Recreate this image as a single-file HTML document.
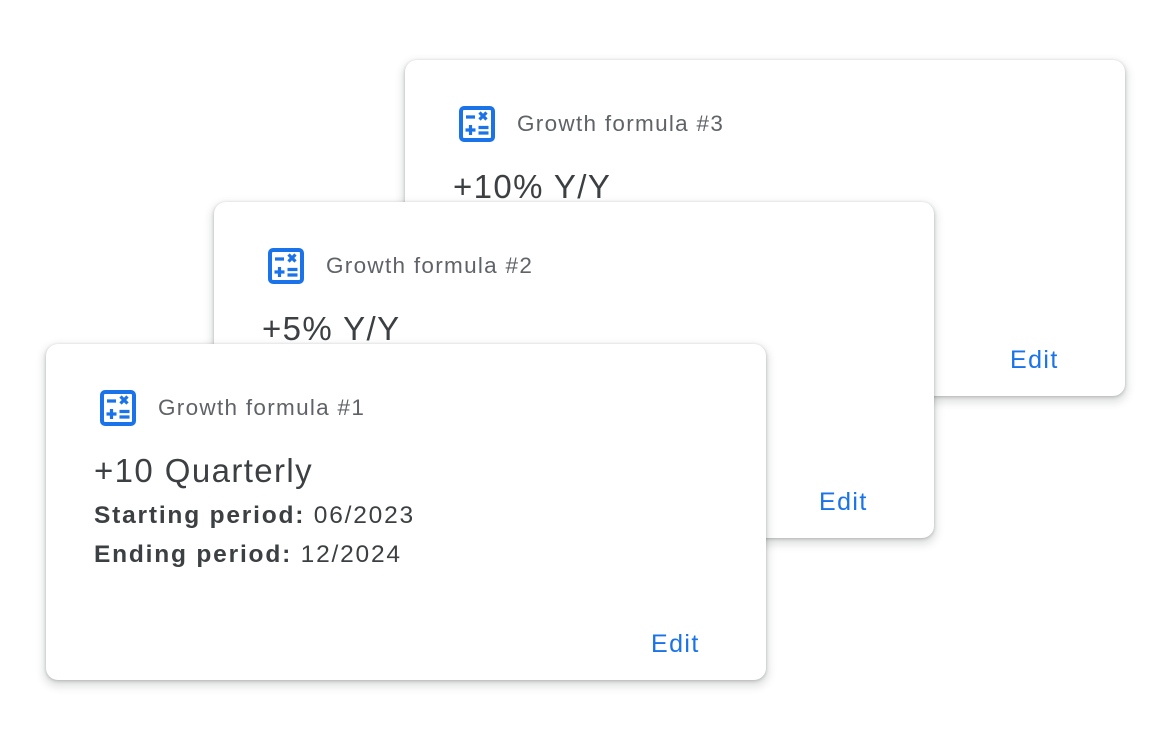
<!DOCTYPE html><html><head><style>
body{margin:0;width:1164px;height:748px;background:#fff;position:relative;overflow:hidden;font-family:"Liberation Sans",Arial,sans-serif}
.c{position:absolute;width:720px;height:336px;background:#fff;border-radius:12px;box-shadow:0 1px 3px rgba(60,64,67,.3),0 4px 8px 3px rgba(60,64,67,.15)}
.ic{position:absolute;left:54px;top:46px;width:36px;height:36px}
.t{position:absolute;left:112px;top:51px;font-size:22.5px;color:#5f6368;letter-spacing:1.3px}
.h{position:absolute;left:48px;top:108px;font-size:33px;color:#3c4043;letter-spacing:1.4px}
.l{position:absolute;left:48px;font-size:24.5px;color:#3c4043;letter-spacing:1.8px}
.l b{font-weight:bold}
.e{position:absolute;left:605px;top:286px;font-size:25px;color:#1a73e8;letter-spacing:1.4px}
</style></head><body>
<svg width="0" height="0" style="position:absolute"><defs><symbol id="i" viewBox="0 0 36 36"><rect x="2" y="2" width="32" height="32" rx="3" fill="none" stroke="#1a73e8" stroke-width="4"/><g stroke="#1a73e8" stroke-width="3.2"><path d="M7 11h9M20.5 6.5l7 7M27.5 6.5l-7 7M6.5 24h10M11.5 19v10M19.5 21.5h10M19.5 27h10"/></g></symbol></defs></svg>
<div class="c" style="left:405px;top:60px"><svg class="ic"><use href="#i"/></svg><div class="t">Growth formula #3</div><div class="h">+10% Y/Y</div><div class="e">Edit</div></div>
<div class="c" style="left:214px;top:202px"><svg class="ic"><use href="#i"/></svg><div class="t">Growth formula #2</div><div class="h">+5% Y/Y</div><div class="e">Edit</div></div>
<div class="c" style="left:46px;top:344px"><svg class="ic"><use href="#i"/></svg><div class="t">Growth formula #1</div><div class="h">+10 Quarterly</div>
<div class="l" style="top:158px"><b>Starting period:</b> 06/2023</div>
<div class="l" style="top:197px"><b>Ending period:</b> 12/2024</div>
<div class="e">Edit</div></div>
</body></html>
